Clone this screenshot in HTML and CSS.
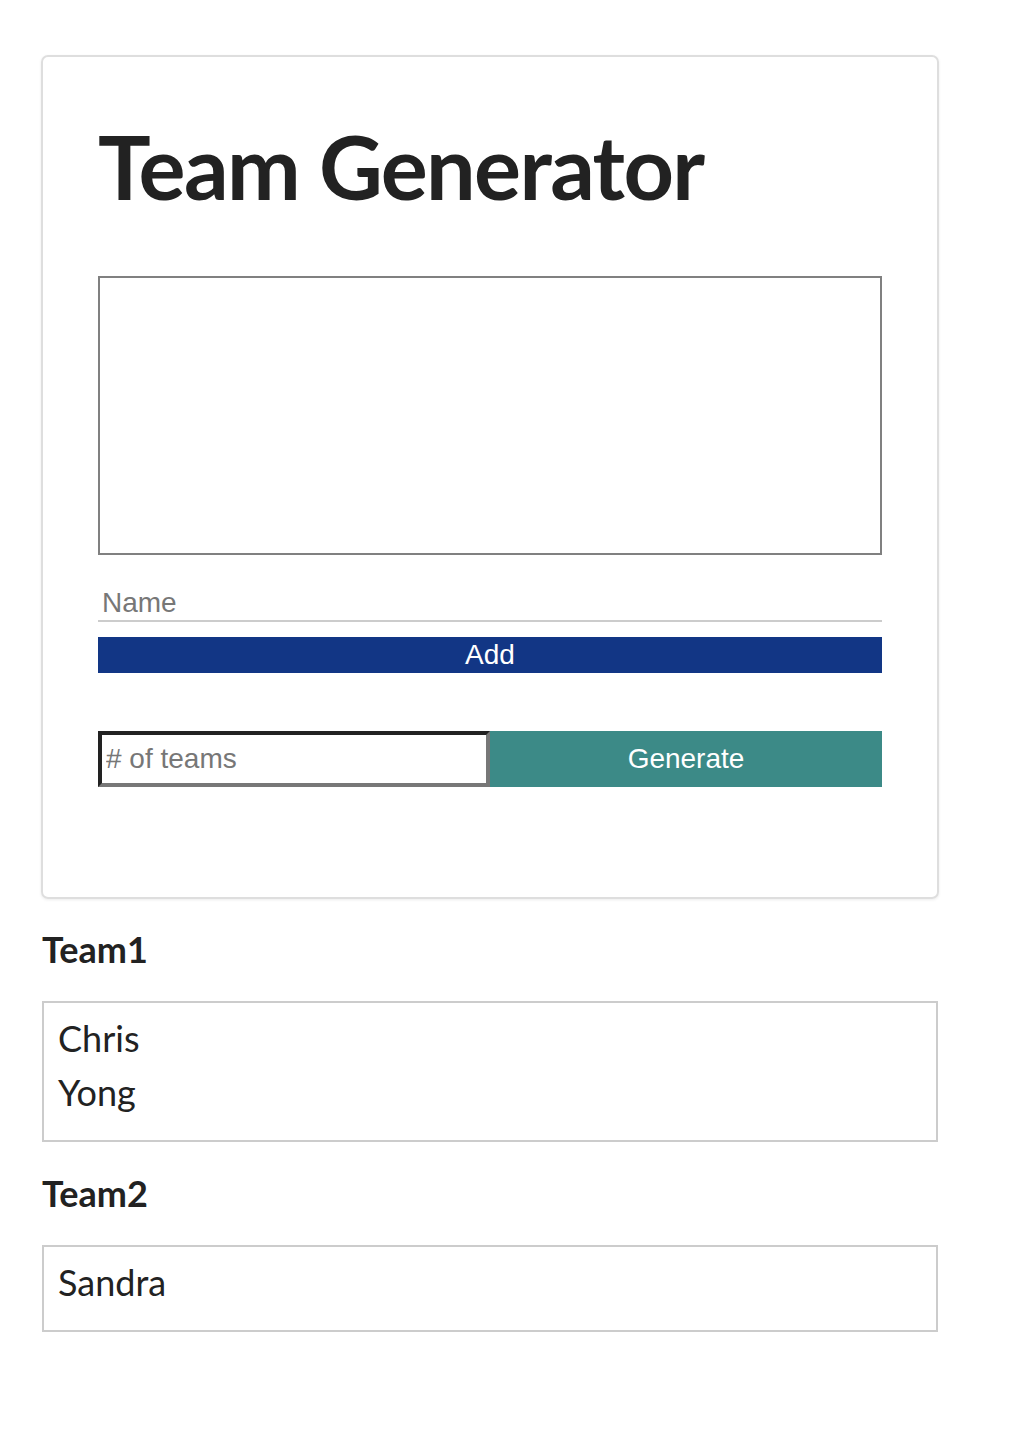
FILE: index.html
```html
<!DOCTYPE html>
<html lang="en">
<head>
<meta charset="utf-8">
<title>Team Generator</title>
<link rel="stylesheet" href="styles.css">
</head>
<body>
<main class="page">
  <section class="card">
    <h1 class="title">Team Generator</h1>
    <textarea class="names"></textarea>
    <input class="name-input" type="text" placeholder="Name">
    <button class="add-btn">Add</button>
    <div class="gen-row">
      <input class="count-input" type="text" placeholder="# of teams">
      <button class="gen-btn">Generate</button>
    </div>
  </section>
  <section class="teams">
    <h2 class="team-title">Team1</h2>
    <div class="team-box">
      <div class="member">Chris</div>
      <div class="member">Yong</div>
    </div>
    <h2 class="team-title">Team2</h2>
    <div class="team-box">
      <div class="member">Sandra</div>
    </div>
  </section>
</main>
</body>
</html>
```
FILE: styles.css
```css
* { box-sizing: border-box; }
html, body { margin: 0; padding: 0; background: #fff; }
body {
  font-family: Lato, "Noto Sans", sans-serif;
  color: #222;
}
.page {
  padding: 55px 0 40px 41px;
  width: 939px;
}
.card {
  width: 898px;
  border: 2px solid #dedede;
  border-radius: 7px;
  box-shadow: 0 1px 3px rgba(0,0,0,0.08);
  padding: 56px 55px 110px 55px;
  display: flex;
  flex-direction: column;
}
.title {
  margin: 0 0 57px 0;
  font-size: 88px;
  font-weight: 700;
  line-height: normal;
  letter-spacing: -1.6px;
  color: #222;
}
.names {
  display: block;
  width: 784px;
  height: 279px;
  border: 2px solid #808080;
  margin: 0;
  resize: none;
  font-family: "Liberation Sans", Arial, sans-serif;
}
.name-input {
  display: block;
  width: 784px;
  height: 67px;
  margin: 0;
  border: none;
  border-bottom: 2px solid #cccccc;
  padding: 30px 4px 0 4px;
  font-family: "Liberation Sans", Arial, sans-serif;
  font-size: 28px;
  color: #222;
  outline: none;
}
.name-input::placeholder { color: #777; }
.add-btn {
  display: block;
  width: 784px;
  height: 36px;
  margin: 15px 0 0 0;
  border: none;
  padding: 0;
  background: #123685;
  color: #fff;
  font-family: "Liberation Sans", Arial, sans-serif;
  font-size: 28px;
  line-height: 36px;
}
.gen-row {
  display: flex;
  width: 784px;
  height: 56px;
  margin-top: 58px;
}
.count-input {
  flex: 0 0 392px;
  width: 392px;
  height: 56px;
  margin: 0;
  border-style: solid;
  border-width: 4px;
  border-color: #222 #777 #777 #222;
  padding: 0 4px;
  font-family: "Liberation Sans", Arial, sans-serif;
  font-size: 28px;
  color: #222;
  outline: none;
}
.count-input::placeholder { color: #777; }
.gen-btn {
  flex: 1 1 auto;
  height: 56px;
  margin: 0;
  border: none;
  background: #3c8a87;
  color: #fff;
  font-family: "Liberation Sans", Arial, sans-serif;
  font-size: 28px;
}
.teams {
  padding: 0 1px;
}
.team-title {
  margin: 28px 0 30px 0;
  font-size: 36px;
  font-weight: 700;
  line-height: normal;
  color: #222;
}
.team-title + .team-box + .team-title { margin-top: 29px; }
.team-box {
  width: 896px;
  border: 2px solid #cccccc;
  padding: 8px 14px 21px 14px;
}
.member {
  font-size: 36px;
  line-height: 54px;
  color: #222;
}
```
